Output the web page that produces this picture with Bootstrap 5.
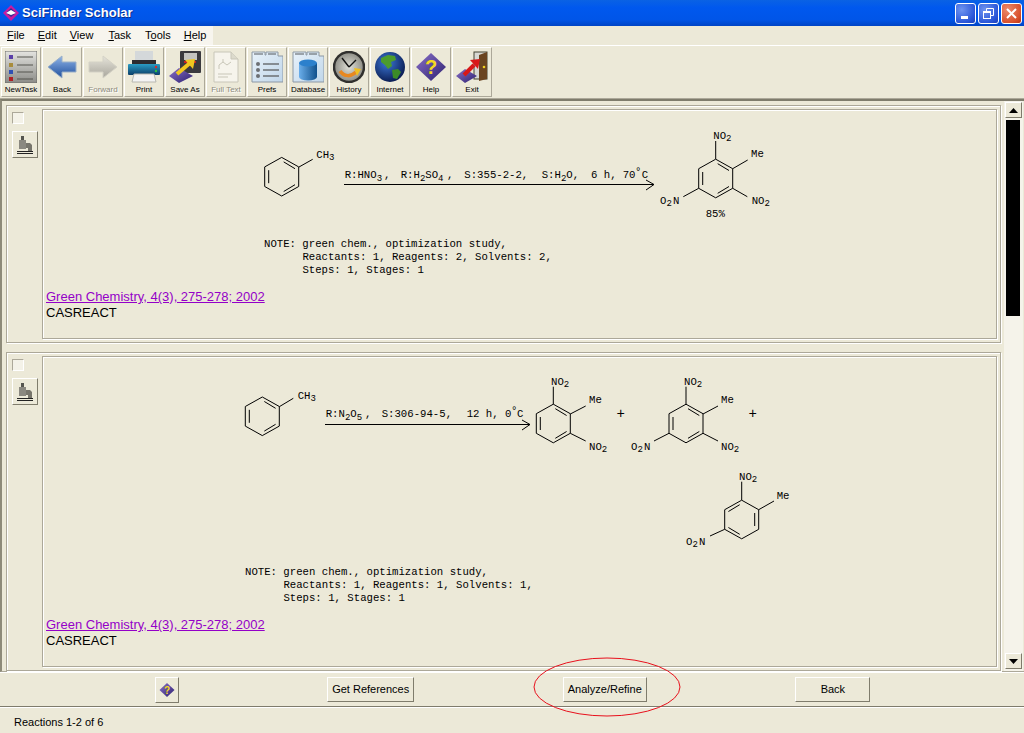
<!DOCTYPE html>
<html lang="en">
<head>
    <meta charset="UTF-8">
    <meta name="viewport" content="width=device-width, initial-scale=1.0">
    <title>SciFinder Scholar</title>
    <link rel="stylesheet" href="https://cdn.jsdelivr.net/npm/bootstrap@5.3.0/dist/css/bootstrap.min.css">
    <style>
        body {
            background-color: #ece9d8;
            font-family: "Liberation Sans", Arial, sans-serif;
            color: #000;
        }

        .app-window {
            width: 1024px;
            height: 733px;
            overflow: hidden;
            position: relative;
        }

        /* title bar */
        .title-bar {
            height: 26px;
            padding: 0 2px 0 3px;
            background: linear-gradient(180deg, #0a62e4 0, #0058ee 30%, #0055e8 75%, #0044c4 100%);
        }

        .title-text {
            color: #fff;
            font-size: 13px;
            font-weight: 700;
            margin-left: 3px;
            text-shadow: 1px 1px 0 #0a2f8c;
        }

        .win-btn {
            width: 21px;
            height: 21px;
            margin-left: 2px;
            border: 1px solid #fff;
            border-radius: 3px;
            background: radial-gradient(circle at 30% 30%, #6e94f0, #2a56d8 70%, #1c3fb8);
        }

        .win-close {
            background: radial-gradient(circle at 30% 30%, #ec8a6c, #d8502c 70%, #b83414);
        }

        /* menu */
        .menu-strip {
            height: 19px;
        }

        .menu-list {
            width: 213px;
            height: 19px;
            padding-left: 7px;
            gap: 13px;
            background-color: #f7f5ee;
            font-size: 11px;
            line-height: 19px;
        }

        .menu-list span:nth-child(3) {
            margin-right: 2px;
        }

        .menu-list span:nth-child(4) {
            margin-right: 1px;
        }

        .tool-strip {
            height: 54px;
            padding: 1px 0 0 1px;
            gap: 1px;
            border-top: 1px solid #fff;
            border-bottom: 1px solid #aca899;
        }

        .tool-btn {
            width: 40px;
            height: 50px;
            padding: 2px 0 0;
            border: 1px solid;
            border-color: #fff #aca899 #aca899 #fff;
            border-radius: 0;
            background-color: #ece9d8;
            font-size: 8px;
            line-height: 11px;
            color: #000;
            white-space: nowrap;
        }

        .tool-btn svg {
            display: block;
            margin: 0 auto 1px;
        }

        .tool-btn.tool-off {
            color: #8c8a7c;
            text-shadow: 1px 1px 0 #fff;
        }

        /* main pane */
        .main-pane {
            height: 573px;
            border-top: 2px solid #7f7c6c;
            border-left: 2px solid #8e8b7a;
            border-bottom: 1px solid #aca899;
        }

        .result-list {
            width: 1002px;
            padding: 4px 3px 0 4px;
            gap: 9px;
        }

        .result-row {
            padding: 3px;
            border: 1px solid #aca899;
            box-shadow: inset 1px 1px 0 #fff, 1px 1px 0 #fff;
        }

        .result-side {
            width: 32px;
            padding: 3px 0 0 2px;
            gap: 7px;
        }

        .result-check[type=checkbox] {
            width: 12px;
            height: 12px;
            margin: 0;
            border: 1px solid;
            border-color: #aca899 #fff #fff #aca899;
            border-radius: 0;
            background-color: #f4f2e8;
        }

        .micro-btn {
            width: 26px;
            height: 27px;
            padding: 0;
            border: 1px solid;
            border-color: #fff #7f7c6c #7f7c6c #fff;
            border-radius: 0;
            background-color: #ece9d8;
        }

        .result-body {
            padding-bottom: 17px;
            border: 1px solid #aca899;
            box-shadow: inset 1px 1px 0 #fff, 1px 1px 0 #fff;
            font-size: 13px;
            line-height: 16px;
        }

        .result-body svg {
            display: block;
        }

        .result-body a {
            color: #9400c8;
            margin-left: 3px;
        }

        .result-body .cite-line {
            margin-top: 1px;
        }

        .result-body .db-name {
            margin-left: 3px;
        }

        .chem text {
            font-family: "Liberation Mono", "Courier New", monospace;
            font-size: 10.67px;
            fill: #000;
        }

        .chem .sub {
            font-size: 9px;
        }

        .chem .plus-sign {
            font-size: 14px;
        }

        .chem line, .chem polyline {
            stroke: #000;
            stroke-width: 1;
            fill: none;
        }

        /* scrollbar */
        .scroll-col {
            width: 19px;
            padding: 1px 1px 2px 1px;
            background-color: #f5f3ea;
        }

        .scroll-btn {
            width: 17px;
            height: 16px;
            padding: 0;
            border: 1px solid;
            border-color: #fff #7f7c6c #7f7c6c #fff;
            border-radius: 0;
            background-color: #ece9d8;
        }

        .scroll-thumb {
            width: 14px;
            height: 196px;
            margin: 2px 0 0 1px;
            background-color: #000;
        }

        /* bottom */
        .action-bar {
            height: 35px;
            padding: 0 5px 0 6px;
            border-top: 1px solid #fff;
            border-bottom: 1px solid #7f7c6c;
        }

        .action-btn {
            height: 25px;
            padding: 0;
            border: 1px solid;
            border-color: #fff #7f7c6c #7f7c6c #fff;
            border-radius: 0;
            background-color: #ece9d8;
            font-size: 11px;
            color: #000;
        }

        .act-help { width: 24px; height: 26px; }
        .act-refs { width: 87px; }
        .act-refine { width: 84px; }
        .act-back { width: 75px; }

        .status-line {
            height: 26px;
            padding-left: 14px;
            border-top: 1px solid #fff;
            font-size: 11px;
            line-height: 29px;
        }

        .red-ring {
            position: absolute;
            left: 533px;
            top: 657px;
        }

        .svg-defs {
            position: absolute;
            width: 0;
            height: 0;
        }
    </style>
</head>
<body>
    <svg class="svg-defs" aria-hidden="true">
        <defs>
            <g id="ring">
                <polyline points="0,-19.3 17,-9.8 17,9.8 0,19.3 -17,9.8 -17,-9.8 0,-19.3" fill="none" stroke="#000"/>
                <line x1="-13" y1="-6.5" x2="-13" y2="6.5" stroke="#000"/>
                <line x1="2" y1="-14.8" x2="13.3" y2="-8" stroke="#000"/>
                <line x1="2" y1="14.8" x2="13.3" y2="8" stroke="#000"/>
            </g>
            <g id="microscope">
                <rect x="8" y="3" width="3" height="5" fill="#55554f"/>
                <rect x="6" y="7" width="7" height="9" fill="#8a8880"/>
                <path d="M13 10h4l2 2v6h-4v-3h-2z" fill="#77756c"/>
                <path d="M4 18.5h16M4 20.5h16" stroke="#222" stroke-width="1"/>
            </g>
            <linearGradient id="gBox" x1="0" y1="0" x2="0" y2="1"><stop offset="0" stop-color="#e4e4e0"/><stop offset="1" stop-color="#8c8c88"/></linearGradient>
            <linearGradient id="gBlue" x1="0" y1="0" x2="0" y2="1"><stop offset="0" stop-color="#8fb4e8"/><stop offset="1" stop-color="#1f4f9c"/></linearGradient>
            <linearGradient id="gGrey" x1="0" y1="0" x2="0" y2="1"><stop offset="0" stop-color="#e6e4da"/><stop offset="1" stop-color="#a8a69c"/></linearGradient>
            <linearGradient id="gPrinter" x1="0" y1="0" x2="0" y2="1"><stop offset="0" stop-color="#2a9cc4"/><stop offset="1" stop-color="#0c3f6a"/></linearGradient>
            <linearGradient id="gPurple" x1="0" y1="0" x2="1" y2="1"><stop offset="0" stop-color="#8a70c8"/><stop offset="1" stop-color="#2c2070"/></linearGradient>
            <linearGradient id="gCyl" x1="0" y1="0" x2="1" y2="0"><stop offset="0" stop-color="#6aaeea"/><stop offset="1" stop-color="#10508c"/></linearGradient>
            <linearGradient id="gPanel" x1="0" y1="0" x2="1" y2="1"><stop offset="0" stop-color="#e8f2fa"/><stop offset="1" stop-color="#c0d6ea"/></linearGradient>
            <radialGradient id="gGlobe" cx=".4" cy=".35" r=".7"><stop offset="0" stop-color="#3c78d8"/><stop offset="1" stop-color="#08184c"/></radialGradient>
            <radialGradient id="gClock" cx=".5" cy=".5" r=".5"><stop offset="0" stop-color="#e0e0d8"/><stop offset="1" stop-color="#8c8c84"/></radialGradient>
            <g id="helpDiamond">
                <polygon points="16,2 31,16 16,30 1,16" fill="url(#gPurple)"/>
                <text x="16" y="23" text-anchor="middle" font-family="Liberation Sans, sans-serif" font-weight="700" font-size="20" fill="#f4d820">?</text>
            </g>
        </defs>
    </svg>

    <div class="app-window d-flex flex-column">
        <!-- Title bar -->
        <div class="title-bar d-flex align-items-center flex-shrink-0">
            <svg width="16" height="16" viewBox="0 0 16 16">
                <polygon points="8,0 16,8 8,16 0,8" fill="#c81aa0"/>
                <polygon points="8,3 13,8 8,12 3,8" fill="#3a2a90"/>
                <path d="M3 8 L8 5 L13 8 L8 10 Z" fill="#fff"/>
            </svg>
            <span class="title-text">SciFinder Scholar</span>
            <div class="win-btn d-flex align-items-center justify-content-center ms-auto">
                <svg width="13" height="13" viewBox="0 0 13 13"><rect x="2" y="9" width="7" height="3" fill="#fff"/></svg>
            </div>
            <div class="win-btn d-flex align-items-center justify-content-center">
                <svg width="13" height="13" viewBox="0 0 13 13" fill="none" stroke="#fff"><rect x="1.5" y="4.5" width="7" height="7"/><path d="M1.5 5.5h7" stroke-width="1"/><path d="M4.5 4V1.5h7v7H9"/></svg>
            </div>
            <div class="win-btn win-close d-flex align-items-center justify-content-center">
                <svg width="13" height="13" viewBox="0 0 13 13" stroke="#fff" stroke-width="2"><path d="M2 2l9 9M11 2l-9 9"/></svg>
            </div>
        </div>

        <!-- Menu -->
        <div class="menu-strip flex-shrink-0">
            <div class="menu-list d-flex">
                <span><u>F</u>ile</span>
                <span><u>E</u>dit</span>
                <span><u>V</u>iew</span>
                <span><u>T</u>ask</span>
                <span>T<u>o</u>ols</span>
                <span><u>H</u>elp</span>
            </div>
        </div>

        <!-- Toolbar -->
        <div class="tool-strip d-flex flex-shrink-0">
            <button class="btn tool-btn" type="button">
                <svg width="32" height="32" viewBox="0 0 32 32">
                    <rect x="0" y="0" width="32" height="32" fill="url(#gBox)" stroke="#6c6c68"/>
                    <rect x="4" y="4" width="4" height="4" fill="#5a3fa8"/><rect x="4" y="12" width="4" height="4" fill="#a88c3c"/><rect x="4" y="19" width="4" height="4" fill="#2f50b4"/><rect x="4" y="26" width="4" height="4" fill="#b02024"/>
                    <path d="M12 6h16M12 14h16M12 21h16M12 28h16" stroke="#55554f" stroke-width="1"/>
                </svg>
                NewTask
            </button>
            <button class="btn tool-btn" type="button">
                <svg width="32" height="32" viewBox="0 0 32 32">
                    <polygon points="2,16 16,5 16,11 30,11 30,21 16,21 16,27" fill="url(#gBlue)" stroke="#9ab0c8"/>
                </svg>
                Back
            </button>
            <button class="btn tool-btn tool-off" type="button">
                <svg width="32" height="32" viewBox="0 0 32 32">
                    <polygon points="30,16 16,5 16,11 2,11 2,21 16,21 16,27" fill="url(#gGrey)" stroke="#d4d2c6"/>
                </svg>
                Forward
            </button>
            <button class="btn tool-btn" type="button">
                <svg width="32" height="32" viewBox="0 0 32 32">
                    <rect x="7" y="0" width="18" height="10" fill="#d4d8da"/>
                    <rect x="4" y="9" width="24" height="4" fill="#2c2c30"/>
                    <rect x="0" y="13" width="32" height="11" rx="1" fill="url(#gPrinter)"/>
                    <polygon points="6,23 26,23 28,31 4,31" fill="#f4f4f4" stroke="#b8b8b0"/>
                    <circle cx="28" cy="16" r="1.2" fill="#e02828"/><circle cx="28" cy="20" r="1.2" fill="#30c040"/>
                </svg>
                Print
            </button>
            <button class="btn tool-btn" type="button">
                <svg width="32" height="32" viewBox="0 0 32 32">
                    <rect x="11" y="0" width="21" height="22" rx="1" fill="#3a3a3e"/>
                    <rect x="15" y="2" width="13" height="7" fill="#c4c4c0"/>
                    <rect x="15" y="10" width="12" height="2" fill="#c82020"/>
                    <polygon points="0,25 10,17 24,25 10,32" fill="url(#gPurple)"/>
                    <path d="M8 23 L21 12" stroke="#f0c820" stroke-width="4"/>
                    <polygon points="16,9 26,8 24,18" fill="#f0c820"/>
                </svg>
                Save As
            </button>
            <button class="btn tool-btn tool-off" type="button">
                <svg width="32" height="32" viewBox="0 0 32 32">
                    <path d="M4 1H21L28 8V31H4Z" fill="#f6f4ec" stroke="#c8c6b8"/>
                    <path d="M21 1V8H28" fill="#dcdacc" stroke="#c8c6b8"/>
                    <path d="M9 14l4-3 4 3 4-3M13 11v-3M9 14v4M8 23h14M8 26h10" stroke="#c8c6b8" fill="none"/>
                </svg>
                Full Text
            </button>
            <button class="btn tool-btn" type="button">
                <svg width="32" height="32" viewBox="0 0 32 32">
                    <path d="M1 31V1H14V4H15V1H27V5H32V31Z" fill="url(#gPanel)" stroke="#8c98a4"/>
                    <path d="M3 3h9M17 3h8" stroke="#55585c"/>
                    <circle cx="7" cy="13" r="2" fill="#6c7074"/><circle cx="7" cy="19" r="2" fill="#6c7074"/><circle cx="7" cy="25" r="2" fill="#6c7074"/>
                    <path d="M12 13h16M12 19h16M12 25h16" stroke="#6c7074" stroke-width="1.5"/>
                </svg>
                Prefs
            </button>
            <button class="btn tool-btn" type="button">
                <svg width="32" height="32" viewBox="0 0 32 32">
                    <path d="M1 31V1H14V4H15V1H27V5H32V31Z" fill="url(#gPanel)" stroke="#8c98a4"/>
                    <path d="M3 3h9M17 3h8" stroke="#55585c"/>
                    <path d="M7 12V26A9 3.5 0 0 0 25 26V12Z" fill="url(#gCyl)"/>
                    <ellipse cx="16" cy="12" rx="9" ry="3.5" fill="#2c80cc"/>
                </svg>
                Database
            </button>
            <button class="btn tool-btn" type="button">
                <svg width="32" height="32" viewBox="0 0 32 32">
                    <circle cx="16" cy="16" r="15" fill="url(#gClock)" stroke="#30302e" stroke-width="2.5"/>
                    <path d="M16 16L9 7M16 16L23 9" stroke="#111" stroke-width="1.4"/>
                    <path d="M7 20C11 26 18 26 23 21" stroke="#e88820" stroke-width="3.5" fill="none"/>
                    <polygon points="21,17 28,18 24,25" fill="#f0c020"/>
                </svg>
                History
            </button>
            <button class="btn tool-btn" type="button">
                <svg width="32" height="32" viewBox="0 0 32 32">
                    <circle cx="16" cy="16" r="15" fill="url(#gGlobe)"/>
                    <path d="M7 7L14 4L21 5L22 9L17 11L18 15L14 18L11 14L7 11Z" fill="#4c9c2c"/>
                    <path d="M18 19L24 18L27 21L23 28L19 27Z" fill="#3c8c28"/>
                </svg>
                Internet
            </button>
            <button class="btn tool-btn" type="button">
                <svg width="32" height="32" viewBox="0 0 32 32"><use href="#helpDiamond"/></svg>
                Help
            </button>
            <button class="btn tool-btn" type="button">
                <svg width="32" height="32" viewBox="0 0 32 32">
                    <rect x="18" y="1" width="13" height="27" fill="#d8d8d4" stroke="#443"/>
                    <polygon points="23,4 31,1 31,28 23,30" fill="#6a4420"/>
                    <circle cx="28" cy="16" r="1.3" fill="#f0d020"/>
                    <polygon points="0,25 9,18 21,25 9,32" fill="url(#gPurple)"/>
                    <path d="M8 24L18 14" stroke="#d81818" stroke-width="4"/>
                    <polygon points="14,9 24,8 22,18" fill="#d81818"/>
                </svg>
                Exit
            </button>
        </div>

        <!-- Results -->
        <div class="main-pane d-flex flex-shrink-0">
            <div class="result-list d-flex flex-column">
                <div class="result-row d-flex">
                    <div class="result-side d-flex flex-column">
                        <input class="form-check-input result-check" type="checkbox">
                        <button class="btn micro-btn d-flex align-items-center justify-content-center" type="button">
                            <svg width="24" height="24" viewBox="0 0 24 24"><use href="#microscope"/></svg>
                        </button>
                    </div>
                    <div class="result-body flex-grow-1">
                        <svg class="chem" width="952" height="178" viewBox="43 110 952 178">
                            <use href="#ring" x="281.7" y="176.7"/>
                            <line x1="299" y1="167" x2="312.7" y2="159.3"/>
                            <text x="316.3" y="158.3">CH<tspan class="sub" dy="2">3</tspan></text>
                            <text x="344.7" y="178.3">R:HNO<tspan class="sub" dy="3">3</tspan></text>
                            <text x="384" y="178.3">,</text>
                            <text x="400.7" y="178.3">R:H<tspan class="sub" dy="3">2</tspan><tspan dy="-3">SO</tspan><tspan class="sub" dy="3">4</tspan></text>
                            <text x="447" y="178.3">,</text>
                            <text x="464.3" y="178.3">S:355-2-2,</text>
                            <text x="541.7" y="178.3">S:H<tspan class="sub" dy="3">2</tspan><tspan dy="-3">O,</tspan></text>
                            <text x="591" y="178.3">6 h,</text>
                            <text x="622.7" y="178.3">70</text>
                            <text x="635" y="175">°</text>
                            <text x="641.7" y="178.3">C</text>
                            <line x1="344" y1="184.5" x2="654" y2="184.5"/>
                            <polyline points="646,180 654,184.5 646,190"/>
                            <use href="#ring" x="715.7" y="178.5"/>
                            <text x="713.3" y="139.3">NO<tspan class="sub" dy="2">2</tspan></text>
                            <line x1="715.7" y1="141" x2="715.7" y2="159"/>
                            <line x1="732.7" y1="168.7" x2="747.7" y2="160"/>
                            <text x="751" y="157.3">Me</text>
                            <line x1="732.7" y1="188.3" x2="747.3" y2="196.7"/>
                            <text x="751.7" y="204.3">NO<tspan class="sub" dy="2">2</tspan></text>
                            <line x1="698.7" y1="188.3" x2="683.3" y2="196.7"/>
                            <text x="660" y="204">O<tspan class="sub" dy="2">2</tspan></text>
                            <text x="673" y="204">N</text>
                            <text x="705.7" y="216.7">85%</text>
                            <text x="264" y="247.3">NOTE: green chem., optimization study,</text>
                            <text x="302.4" y="260.3">Reactants: 1, Reagents: 2, Solvents: 2,</text>
                            <text x="302.4" y="273.3">Steps: 1, Stages: 1</text>
                        </svg>
                        <div class="cite-line"><a href="#">Green Chemistry, 4(3), 275-278; 2002</a></div>
                        <div class="db-name">CASREACT</div>
                    </div>
                </div>

                <div class="result-row d-flex">
                    <div class="result-side d-flex flex-column">
                        <input class="form-check-input result-check" type="checkbox">
                        <button class="btn micro-btn d-flex align-items-center justify-content-center" type="button">
                            <svg width="24" height="24" viewBox="0 0 24 24"><use href="#microscope"/></svg>
                        </button>
                    </div>
                    <div class="result-body flex-grow-1">
                        <svg class="chem" width="952" height="259" viewBox="43 357 952 259">
                            <use href="#ring" x="262.3" y="416.3"/>
                            <line x1="279.3" y1="406.7" x2="293.3" y2="398.3"/>
                            <text x="297.7" y="399">CH<tspan class="sub" dy="2">3</tspan></text>
                            <text x="325.7" y="417.3">R:N<tspan class="sub" dy="3">2</tspan><tspan dy="-3">O</tspan><tspan class="sub" dy="3">5</tspan></text>
                            <text x="365" y="417.3">,</text>
                            <text x="381.7" y="417.3">S:306-94-5,</text>
                            <text x="466.7" y="417.3">12 h,</text>
                            <text x="505" y="417.3">0</text>
                            <text x="511" y="414">°</text>
                            <text x="517" y="417.3">C</text>
                            <line x1="325" y1="424.5" x2="530" y2="424.5"/>
                            <polyline points="522,420 530,424.5 522,430"/>

                            <use href="#ring" x="553.3" y="423.5"/>
                            <text x="551" y="385">NO<tspan class="sub" dy="2">2</tspan></text>
                            <line x1="553.3" y1="386.7" x2="553.3" y2="404.3"/>
                            <line x1="570.3" y1="414" x2="585.7" y2="406"/>
                            <text x="589" y="403.3">Me</text>
                            <line x1="570.3" y1="433.3" x2="585.7" y2="441"/>
                            <text x="589" y="450">NO<tspan class="sub" dy="2">2</tspan></text>
                            <text class="plus-sign" x="616.5" y="418">+</text>

                            <use href="#ring" x="686" y="423.5"/>
                            <text x="684" y="385">NO<tspan class="sub" dy="2">2</tspan></text>
                            <line x1="686" y1="386.7" x2="686" y2="404.3"/>
                            <line x1="703" y1="414" x2="718" y2="406"/>
                            <text x="721" y="403.3">Me</text>
                            <line x1="703" y1="433.3" x2="718" y2="441"/>
                            <text x="721" y="450">NO<tspan class="sub" dy="2">2</tspan></text>
                            <line x1="669" y1="433.3" x2="654" y2="441"/>
                            <text x="631" y="450">O<tspan class="sub" dy="2">2</tspan></text>
                            <text x="644" y="450">N</text>
                            <text class="plus-sign" x="748.5" y="418">+</text>

                            <use href="#ring" transform="translate(741.7 519.5) scale(-1 1)"/>
                            <text x="739" y="480">NO<tspan class="sub" dy="2">2</tspan></text>
                            <line x1="741.7" y1="481.7" x2="741.7" y2="500"/>
                            <line x1="758.7" y1="509.7" x2="774" y2="501"/>
                            <text x="776.7" y="499.3">Me</text>
                            <line x1="724.7" y1="529.3" x2="710" y2="536"/>
                            <text x="686" y="545">O<tspan class="sub" dy="2">2</tspan></text>
                            <text x="699" y="545">N</text>

                            <text x="245" y="575.3">NOTE: green chem., optimization study,</text>
                            <text x="283.4" y="588.3">Reactants: 1, Reagents: 1, Solvents: 1,</text>
                            <text x="283.4" y="601.3">Steps: 1, Stages: 1</text>
                        </svg>
                        <div class="cite-line"><a href="#">Green Chemistry, 4(3), 275-278; 2002</a></div>
                        <div class="db-name">CASREACT</div>
                    </div>
                </div>
            </div>

            <div class="scroll-col d-flex flex-column">
                <button class="btn scroll-btn d-flex align-items-center justify-content-center" type="button">
                    <svg width="9" height="5" viewBox="0 0 9 5"><polygon points="4.5,0 9,5 0,5" fill="#000"/></svg>
                </button>
                <div class="scroll-thumb"></div>
                <button class="btn scroll-btn d-flex align-items-center justify-content-center mt-auto" type="button">
                    <svg width="9" height="5" viewBox="0 0 9 5"><polygon points="0,0 9,0 4.5,5" fill="#000"/></svg>
                </button>
            </div>
        </div>

        <!-- Bottom actions -->
        <div class="action-bar d-flex align-items-center justify-content-evenly flex-shrink-0">
            <button class="btn action-btn act-help d-flex align-items-center justify-content-center" type="button" aria-label="Help">
                <svg width="16" height="16" viewBox="0 0 32 32"><use href="#helpDiamond"/></svg>
            </button>
            <button class="btn action-btn act-refs" type="button">Get References</button>
            <button class="btn action-btn act-refine" type="button">Analyze/Refine</button>
            <button class="btn action-btn act-back" type="button">Back</button>
        </div>

        <div class="status-line flex-shrink-0">Reactions 1-2 of 6</div>

        <!-- annotation over the button -->
        <svg class="red-ring" width="150" height="62" viewBox="0 0 150 62">
            <ellipse cx="74" cy="30" rx="73" ry="29" fill="none" stroke="#e8101c" stroke-width="1"/>
        </svg>
    </div>

    <script src="https://cdn.jsdelivr.net/npm/bootstrap@5.3.0/dist/js/bootstrap.bundle.min.js"></script>
</body>
</html>
